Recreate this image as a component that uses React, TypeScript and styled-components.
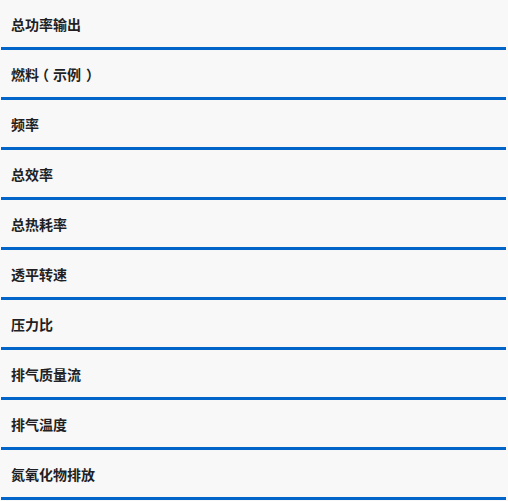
import React from "react";
import styled, { createGlobalStyle } from "styled-components";

const Global = createGlobalStyle`
  html, body {
    margin: 0;
    padding: 0;
    background: #f8f8f8;
  }
  body {
    font-family: "Noto Sans CJK SC", "Noto Sans", sans-serif;
  }
`;

const List = styled.ul`
  list-style: none;
  margin: 0 2px 0 1px;
  padding: 0;
  display: flex;
  flex-direction: column;
`;

const Row = styled.li`
  height: 47px;
  border-bottom: 3px solid #0064c8;
  background: #f8f8f8;
  display: flex;
  align-items: center;
  padding-left: 10px;
  font-size: 14px;
  font-weight: 700;
  color: #1f1f24;
  text-spacing-trim: space-all;
`;

const Label = styled.span`
  white-space: pre;
`;

const Paren = styled.span<{ $open: boolean }>`
  display: inline-block;
  font-feature-settings: "halt" 1;
  padding-left: ${(p) => (p.$open ? "3px" : "5px")};
  padding-right: ${(p) => (p.$open ? "4px" : "2px")};
`;

const renderText = (t: string) =>
  Array.from(t).map((ch, i) =>
    ch === "（" || ch === "）" ? (
      <Paren key={i} $open={ch === "（"}>
        {ch}
      </Paren>
    ) : (
      ch
    )
  );

const items = [
  "总功率输出",
  "燃料（示例）",
  "频率",
  "总效率",
  "总热耗率",
  "透平转速",
  "压力比",
  "排气质量流",
  "排气温度",
  "氮氧化物排放",
];

export default function App() {
  return (
    <>
      <Global />
      <List>
        {items.map((t) => (
          <Row key={t}>
            <Label>{renderText(t)}</Label>
          </Row>
        ))}
      </List>
    </>
  );
}
